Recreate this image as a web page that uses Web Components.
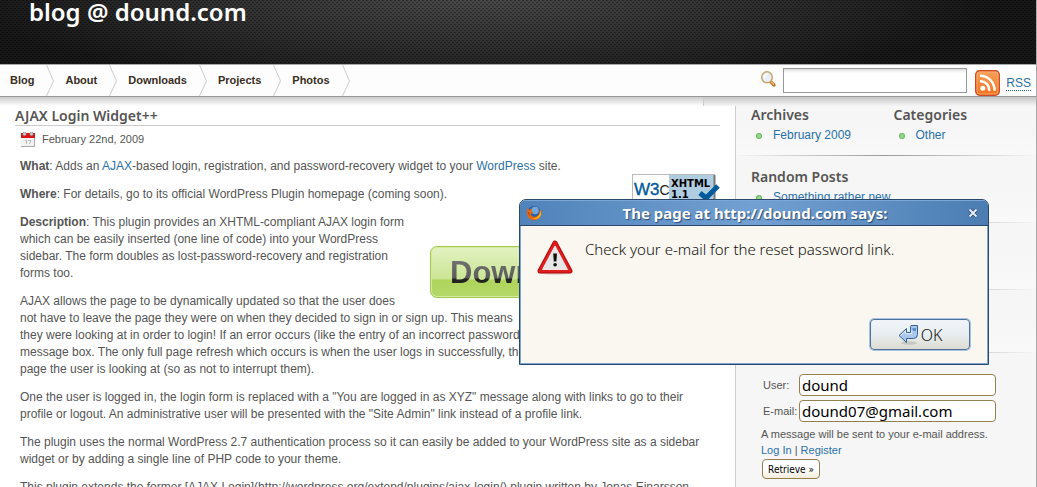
<!DOCTYPE html>
<html lang="en">
<head>
<meta charset="utf-8">
<title>blog @ dound.com</title>
<style>
html, body { margin: 0; height: 100%; }
body { overflow: hidden; background: #fff; color: #555; font: 12px/17px "Liberation Sans", Arial, sans-serif; }
</style>
</head>
<body>
<blog-page></blog-page>

<script>
function define(name, html) {
  const template = document.createElement("template");
  template.innerHTML = html;
  customElements.define(name, class extends HTMLElement {
    constructor() {
      super();
      this.attachShadow({ mode: "open" }).appendChild(template.content.cloneNode(true));
    }
  });
}

define("site-header", `
<style>
:host { display: block; height: 65px; box-sizing: border-box; padding-left: 29px;
  border-bottom: 1px solid #aaa;
  background:
    conic-gradient(at 2px 1px, rgba(0,0,0,.4) 25%, transparent 0) 0 0 / 4px 4px,
    conic-gradient(at 2px 1px, rgba(0,0,0,.4) 25%, transparent 0) 2px 2px / 4px 4px,
    radial-gradient(ellipse 50% 150% at 46% -10%, #4c4c4c 0, #343434 45%, #171717 100%); }
h1 { margin: 0; font: 600 24px/24px "Noto Sans", sans-serif; color: #fff; }
</style>
<h1><slot></slot></h1>`);

define("nav-item", `
<style>
:host { display: flex; align-items: center; gap: 12px; }
a { color: #382e1e; font-weight: bold; font-size: 11px; text-decoration: none; }
svg { display: block; }
</style>
<a href="#"><slot></slot></a>
<svg width="8" height="31" viewBox="0 0 8 31"><path d="M0.500 0L7.500 16L0.500 31" fill="none" stroke="#ccc"/></svg>`);

define("search-box", `
<style>
:host { display: flex; align-items: flex-start; gap: 6px; }
label { display: block; margin-top: 3px; }
svg { display: block; }
input { box-sizing: border-box; width: 184px; height: 25px; margin: 0; padding: 2px 4px; border: 1px solid #999; border-radius: 0; outline: 0;
  background: linear-gradient(#ddd, #fff 4px); font: 12px "Liberation Sans", sans-serif; }
</style>
<label for="q" aria-label="Search"><svg width="17" height="17" viewBox="0 0 17 17">
<path d="M10.500 10.500L14 14" stroke="#b67a2c" stroke-width="3.400" stroke-linecap="round"/>
<path d="M11.500 11L13.500 13.200" stroke="#e9bd7c" stroke-width="1.400" stroke-linecap="round"/>
<ellipse cx="7" cy="6.300" rx="5.300" ry="5.500" fill="#e7f1fb" stroke="#c9a263" stroke-width="1.400"/>
<path d="M4.500 6.500Q4.500 3.500 7.500 3" stroke="#fff" stroke-width="1.500" fill="none"/></svg></label>
<input id="q" type="text">`);

define("rss-link", `
<style>
:host { display: flex; align-items: flex-start; gap: 6px; }
svg { display: block; }
a { color: #2a71a8; text-decoration: none; font-size: 12px; line-height: 14px; border-bottom: 1px dotted #2a71a8; margin-top: 6px; }
</style>
<svg width="25" height="26" viewBox="0 0 25 26">
<defs><linearGradient id="g" x1="0" y1="0" x2="0" y2="1"><stop offset="0" stop-color="#f6a35c"/><stop offset="1" stop-color="#f2711a"/></linearGradient></defs>
<rect x=".7" y=".7" width="23.600" height="24.600" rx="4" fill="url(#g)" stroke="#cf4a22" stroke-width="1.400"/>
<rect x="2" y="2" width="21" height="22" rx="3" fill="none" stroke="#f9b27c" stroke-width=".8"/>
<circle cx="7.800" cy="18.200" r="2.500" fill="#fff"/>
<path d="M5 11.200A8.800 8.800 0 0 1 14.200 20.800M5 5.800A14.500 14.500 0 0 1 19.600 20.800" fill="none" stroke="#fff" stroke-width="2.400"/></svg>
<a href="#"><slot></slot></a>`);

define("nav-bar", `
<style>
:host { display: flex; height: 31px; border-bottom: 1px solid #999; background: #fdfdfd; }
nav { display: flex; gap: 11px; padding-left: 10px; flex: 1; }
.tools { display: flex; gap: 8px; padding: 3px 5px 0 0; align-items: flex-start; }
rss-link { margin-top: 2px; }
</style>
<nav><nav-item>Blog</nav-item><nav-item>About</nav-item><nav-item>Downloads</nav-item><nav-item>Projects</nav-item><nav-item>Photos</nav-item></nav>
<div class="tools"><search-box></search-box><rss-link>RSS</rss-link></div>`);

define("xhtml-badge", `
<style>
:host { display: block; }
svg { display: block; }
</style>
<svg width="88" height="31" viewBox="0 0 88 31">
<rect x=".5" y=".5" width="82" height="30" fill="#fff" stroke="#bbb"/>
<rect x="37" y="1" width="45" height="29" fill="#b0cce0"/>
<path d="M82.500 1V31" stroke="#777" stroke-width="2"/>
<text x="2" y="21" font-family="Liberation Sans" font-size="17" fill="#005a9c" stroke="#005a9c" stroke-width=".4">W3<tspan fill="#222" stroke="none" font-size="14">C</tspan></text>
<text x="39" y="13" font-family="DejaVu Sans" font-size="10" font-weight="bold" fill="#000">XHTML</text>
<text x="39" y="24" font-family="DejaVu Sans" font-size="10" font-weight="bold" fill="#000">1.1</text>
<path d="M68 19L74 24L86 12" fill="none" stroke="#005a9c" stroke-width="5"/>
</svg>`);

define("download-button", `
<style>
:host { display: block; }
a { display: block; box-sizing: border-box; height: 52px; padding-left: 19px; border: 1px solid #a3c84e; border-radius: 7px; text-decoration: none; overflow: hidden;
  background: linear-gradient(#e2f2c2, #cbe595 32px, #aed45c 33px, #b5d968); box-shadow: inset 0 0 0 1px #d3eca0; }
span { display: block; font: bold 31px/52px "Liberation Sans", sans-serif;
  background: linear-gradient(#808080, #5c5c5c 31px, #222 32px); -webkit-background-clip: text; background-clip: text; color: transparent; }
</style>
<a href="#"><span><slot></slot></span></a>`);

define("blog-post", `
<style>
:host { display: block; padding: 0 15px; white-space: nowrap; }
h2 { margin: 0; font: 600 14px/19px "Noto Sans", sans-serif; border-bottom: 1px solid #ccc; }
.date { display: flex; gap: 7px; padding: 5px 0 0 6px; height: 17px; align-items: center; font-size: 11px; }
.date svg { display: block; }
.body { padding: 10px 5px 0; }
p { margin: 0 0 11px; }
a { color: #2a71a8; text-decoration: none; }
xhtml-badge { float: right; margin: -12px -5px 0 0; }
download-button { float: right; clear: right; width: 285px; margin: 32px 0 12px 20px; }
</style>
<h2>AJAX Login Widget++</h2>
<div class="date"><svg width="14" height="15" viewBox="0 0 14 15">
<rect x="0" y="1" width="14" height="14" fill="#f3f3f3"/><path d="M0 14.500H14M13.500 6V15" stroke="#aaa"/><rect y="1" width="14" height="5" fill="#dd1313"/>
<circle cx="3.500" cy="2" r="1.800" fill="#ccc" stroke="#777" stroke-width=".6"/><circle cx="10.500" cy="2" r="1.800" fill="#ccc" stroke="#777" stroke-width=".6"/>
<path d="M4.500 8.500L5.500 8V12M7 8.500H10L8.500 12" fill="none" stroke="#aaa" stroke-width=".8"/></svg>February 22nd, 2009</div>
<div class="body">
<p><b>What</b>: Adds an <a href="#">AJAX</a>-based login, registration, and password-recovery widget to your <a href="#">WordPress</a> site.</p>
<xhtml-badge></xhtml-badge>
<p><b>Where</b>: For details, go to its official WordPress Plugin homepage (coming soon).</p>
<download-button>Download</download-button>
<p><b>Description</b>: This plugin provides an XHTML-compliant AJAX login form<br>which can be easily inserted (one line of code) into your WordPress<br>sidebar. The form doubles as lost-password-recovery and registration<br>forms too.</p>
<p>AJAX allows the page to be dynamically updated so that the user does<br>not have to leave the page they were on when they decided to sign in or sign up. This means<br>they were looking at in order to login! If an error occurs (like the entry of an incorrect password)<br>message box. The only full page refresh which occurs is when the user logs in successfully, then<br>page the user is looking at (so as not to interrupt them).</p>
<p>One the user is logged in, the login form is replaced with a "You are logged in as XYZ" message along with links to go to their<br>profile or logout. An administrative user will be presented with the "Site Admin" link instead of a profile link.</p>
<p>The plugin uses the normal WordPress 2.7 authentication process so it can easily be added to your WordPress site as a sidebar<br>widget or by adding a single line of PHP code to your theme.</p>
<p>This plugin extends the former [AJAX Login](http://wordpress.org/extend/plugins/ajax-login/) plugin written by Jonas Einarsson.</p>
</div>`);

define("side-widget", `
<style>
:host { display: block; flex: 1; }
h3 { margin: 0; font: 600 14px/18px "Noto Sans", sans-serif; }
ul { list-style: none; margin: 0; padding: 3px 0 0 5px; }
li { display: flex; align-items: center; gap: 11px; }
i { width: 6px; height: 6px; border-radius: 50%; background: radial-gradient(circle, #9d8 1px, #5eb45a 3px); }
a { color: #2a71a8; text-decoration: none; }
</style>
<h3><slot name="title"></slot></h3>
<ul><li><i></i><a href="#"><slot></slot></a></li></ul>`);

define("recover-form", `
<style>
:host { display: block; padding: 21px 40px 0 25px; font-size: 11px; }
.row { display: grid; grid-template-columns: 36px 1fr; height: 22px; margin-bottom: 4px; align-items: center; padding-left: 2px; }
input { box-sizing: border-box; width: 100%; height: 22px; margin: 0; padding: 0 2px; border: 1px solid #94804f; border-radius: 4px; outline: 0; background: #fff; color: #000; font: 15px "Noto Sans", sans-serif; }
p { margin: 0; line-height: 16px; }
a { color: #2a71a8; text-decoration: none; }
button { display: block; box-sizing: border-box; width: 58px; height: 20px; margin: 1px 0 0 1px; padding: 0; border: 1px solid #94804f; border-radius: 4px;
  background: linear-gradient(#fff 50%, #f3ecdc); color: #000; font: 10px "DejaVu Sans Condensed", "DejaVu Sans", sans-serif; white-space: nowrap; }
</style>
<form>
<div class="row"><label for="u">User:</label><input id="u" type="text" value="dound"></div>
<div class="row"><label for="e">E-mail:</label><input id="e" type="text" value="dound07@gmail.com"></div>
<p>A message will be sent to your e-mail address.</p>
<p><a href="#">Log In</a> | <a href="#">Register</a></p>
<button type="button">Retrieve »</button>
</form>`);

define("side-bar", `
<style>
:host { display: block; border-left: 1px solid #ccc; background: #f6f6f6; white-space: nowrap; }
section { display: flex; box-sizing: border-box; height: 67px; padding: 12px 0 0 15px;
  background: linear-gradient(90deg, #f6f6f6, #999 50%, #f6f6f6) bottom / 100% 1px no-repeat, linear-gradient(#f6f6f6 40%, #f9f9f9); }
section:nth-of-type(1) { height: 50px; padding-top: 0; }
section:nth-of-type(4) { height: 63px; }
</style>
<section><side-widget><span slot="title">Archives</span>February 2009</side-widget><side-widget><span slot="title">Categories</span>Other</side-widget></section>
<section><side-widget><span slot="title">Random Posts</span>Something rather new</side-widget></section>
<section></section>
<section></section>
<recover-form></recover-form>`);

define("alert-dialog", `
<style>
:host { display: flex; flex-direction: column; box-sizing: border-box; height: 166px; border: 1px solid #29486b; border-radius: 7px 7px 0 0; box-shadow: inset 0 0 0 1px #7ca6d4; background: #faf7f0; overflow: hidden; color: #111; font-family: "Noto Sans", sans-serif; }
header { display: flex; align-items: center; height: 25px; padding: 0 10px 0 6px; border-bottom: 1px solid #29486b; background: linear-gradient(90deg, #5083ba, #72a0d2 50%, #4b7db3); box-shadow: inset 0 1px #7ba7d8; color: #fff; }
h2 { flex: 1; margin: 0; text-align: center; font: 700 15px/24px "Noto Sans", sans-serif; text-shadow: 1px 1px 1px #2c4c74; }
header button { display: flex; width: 10px; height: 10px; padding: 0; border: 0; background: none; }
svg { display: block; flex: none; }
.message { display: flex; gap: 12px; padding: 14px 16px 0 17px; flex: 1; }
p { margin: 0; font-size: 15px; font-weight: 300; line-height: 18px; white-space: nowrap; }
footer { display: flex; justify-content: flex-end; padding: 0 18px 14px; }
.ok { display: flex; align-items: center; justify-content: center; gap: 2px; box-sizing: border-box; width: 100px; height: 31px; padding: 0; border: 1px solid #4e7099; border-radius: 4px; box-shadow: 0 0 0 1px #a9c3e3; background: linear-gradient(#f1f5f9, #e8edf0 50%, #dcdcd2); color: #111; font: 300 16px "Noto Sans", sans-serif; }
</style>
<header>
<svg width="16" height="16" viewBox="0 0 16 16"><circle cx="8" cy="8" r="7" fill="#2d5ea8"/><circle cx="9" cy="5.500" r="3.800" fill="#6fa8dc"/>
<path d="M1.500 3C0 7 1 12 4 14C8 16.500 13 15 14.800 11C16 8 15 5 13.500 3.500C14 7 13 10.500 10 11.500C7 12.500 4.500 11 5 8.500L7.500 7.500L5.500 6L6 4Q4 3.800 3.300 5Z" fill="#e66a12"/>
<path d="M14.200 5C15 10 11 14 6.500 13.300C10 15.500 14.500 13 15 9Z" fill="#fbc21c"/><path d="M1.500 6Q2 10 4.500 11.500L3 8Z" fill="#b92c0a"/></svg>
<h2>The page at http://dound.com says:</h2>
<button type="button" aria-label="Close"><svg width="10" height="10" viewBox="0 0 10 10"><path d="M1.500 1.500L8.500 8.500M8.500 1.500L1.500 8.500" stroke="#2c4c74" stroke-width="3.500"/><path d="M1.500 1.500L8.500 8.500M8.500 1.500L1.500 8.500" stroke="#e6eef8" stroke-width="2"/></svg></button>
</header>
<div class="message">
<svg width="36" height="35" viewBox="0 0 36 35"><ellipse cx="18" cy="33" rx="16" ry="1.800" fill="#d8d4cb"/>
<path d="M18 3L33 31H3Z" fill="#e9e9e9" stroke="#bd0f12" stroke-width="5" stroke-linejoin="round"/><path d="M18 3L33 31H3Z" fill="none" stroke="#e02020" stroke-width="2.500" stroke-linejoin="round"/>
<path d="M18 6L30.500 29.500H5.500Z" fill="#e6e6e6" stroke="#fff" stroke-width=".8"/>
<path d="M16.200 13.500H20L19.400 21.500H16.800Z" fill="#111"/><circle cx="18.100" cy="24.800" r="1.800" fill="#111"/></svg>
<p>Check your e-mail for the reset password link.</p>
</div>
<footer><button type="button" class="ok"><svg width="21" height="20" viewBox="0 0 21 20"><ellipse cx="11" cy="18" rx="8" ry="1.800" fill="#c6c8c2"/>
<path d="M1 10.500L8.500 3.500V7.500H12.500V1.500Q12.500 .5 14 .5H19.500V9.500Q19.500 13.500 15.500 13.500H8.500V17.500Z" fill="#a9c8ec" stroke="#35619b"/><path d="M2.800 10.500L7.500 6V8.700H13.800V5.500H18.300" fill="none" stroke="#e3effb"/><path d="M14.500 3H18V6H14.500Z" fill="#5f8fc9"/></svg>OK</button></footer>`);

define("blog-page", `
<style>
:host { display: block; box-sizing: border-box; height: 100%; position: relative; border-right: 1px solid #aaa; overflow: hidden; }
.shade { display: grid; grid-template-columns: 1fr 333px; height: 9px; background: linear-gradient(#ccc, #fff); }
.shade i { border-left: 1px solid #ccc; background: linear-gradient(#c6c6c6, #f6f6f6); }
main { display: grid; grid-template-columns: minmax(0, 1fr) 301px; min-height: 100%; }
alert-dialog { position: absolute; top: 199px; right: 47px; width: 470px; }
</style>
<site-header>blog @ dound.com</site-header>
<nav-bar></nav-bar>
<div class="shade"><span></span><i></i></div>
<main><blog-post></blog-post><side-bar></side-bar></main>
<alert-dialog></alert-dialog>`);
</script>
</body>
</html>
